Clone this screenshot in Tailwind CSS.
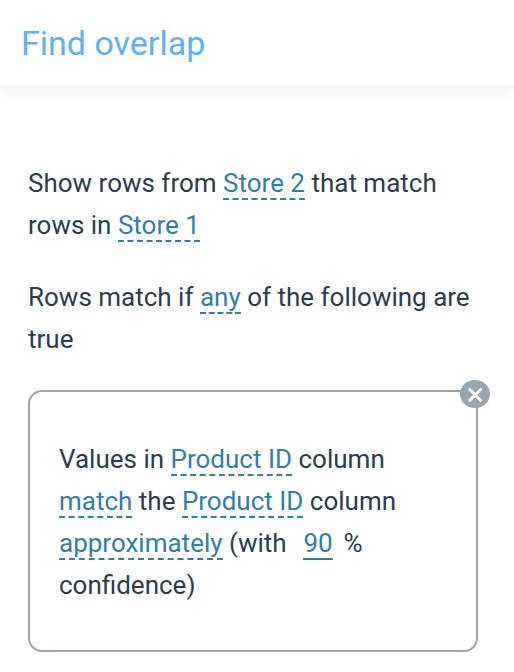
<!DOCTYPE html>
<html lang="en">
<head>
<meta charset="utf-8">
<meta name="viewport" content="width=device-width, initial-scale=1">
<title>Find overlap</title>
<script src="https://cdn.jsdelivr.net/npm/@tailwindcss/browser@4"></script>
</head>
<body class="min-h-screen bg-white font-['Roboto',sans-serif] text-[#2b3c4c]">
<header class="border-b-2 border-[#f2f4f7] px-[21px] py-[22px] shadow-[0_4px_16px_rgba(0,0,0,0.05)]">
<h1 class="text-[34px] leading-[42px] text-[#5eb0f8]">Find overlap</h1>
</header>
<main class="px-7 pt-[74px] pb-5 text-[26px] leading-[42px]">
<p>Show rows from <button type="button" class="cursor-pointer border-b-2 border-dashed border-[#317ea6] leading-[30px] text-[#317ea6]">Store 2</button> that match rows in <button type="button" class="cursor-pointer border-b-2 border-dashed border-[#317ea6] leading-[30px] text-[#317ea6]">Store 1</button></p>
<p class="mt-[30px]">Rows match if <button type="button" class="cursor-pointer border-b-2 border-dashed border-[#317ea6] leading-[30px] text-[#317ea6]">any</button> of the following are true</p>
<section class="relative mt-[30px] mr-2 rounded-[14px] border-2 border-[#98a6b3] px-[29px] pt-[46px] pb-11">
<button type="button" aria-label="Remove condition" class="absolute -top-3 -right-3.5 h-7 w-[30px] cursor-pointer rounded-[50%] bg-[#98a6b3]">
<svg viewBox="0 0 30 28" class="size-full" fill="none" stroke="white" stroke-width="3" stroke-linecap="round"><path d="M9.8 9.5 20.6 20.3M20.6 9.5 9.8 20.3"/></svg>
</button>
<p>Values in <button type="button" class="cursor-pointer border-b-2 border-dashed border-[#317ea6] leading-[30px] text-[#317ea6]">Product ID</button> column <button type="button" class="cursor-pointer border-b-2 border-dashed border-[#317ea6] leading-[30px] text-[#317ea6]">match</button> the <button type="button" class="cursor-pointer border-b-2 border-dashed border-[#317ea6] leading-[30px] text-[#317ea6]">Product ID</button> column <button type="button" class="cursor-pointer border-b-2 border-dashed border-[#317ea6] leading-[30px] text-[#317ea6]">approximately</button> (with <input type="text" inputmode="numeric" aria-label="Confidence percent" value="90" class="mr-1 ml-2.5 h-8 w-[30px] border-b-2 border-[#317ea6] text-center leading-[30px] text-[#317ea6] outline-none"> % confidence)</p>
</section>
</main>
</body>
</html>
